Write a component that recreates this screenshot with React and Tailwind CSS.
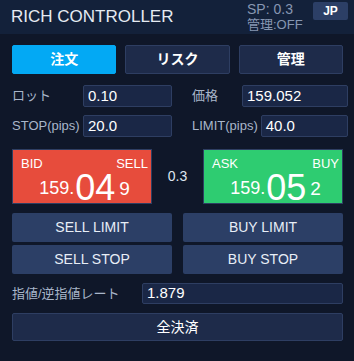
const font = { fontFamily: '"Liberation Sans", "Noto Sans CJK JP", sans-serif' };

const Field = ({ label, value, labelClass }) => (
    <div className="flex items-center">
        <span className={`text-[13px] text-[#a9b6ca] whitespace-nowrap ${labelClass}`}>{label}</span>
        <div className="flex-1 h-[22px] bg-[#1a2746] border border-[#2e3e62] rounded-[2px] px-[4px] flex items-center text-[15px] text-white">
            {value}
        </div>
    </div>
);

const PriceBox = ({ color, left, right, big, small }) => (
    <div className={`w-[140px] h-[55px] ${color} border border-[#2e3e62] text-white pl-2 pr-[3px] pt-[6px] flex flex-col`}>
        <div className="flex justify-between text-[13px] leading-[15px]">
            <span>{left}</span>
            <span>{right}</span>
        </div>
        <div className="flex items-center justify-center gap-[1px] -mt-[1px]">
            <span className="text-[18px] leading-none">159.</span>
            <span className="text-[36px] leading-none">{big}</span>
            <span className="text-[19px] leading-none ml-[3px]">{small}</span>
        </div>
    </div>
);

const OrderButton = ({ children }) => (
    <button className="h-[29px] bg-[#2c3f66] rounded-[2px] text-[14px] text-[#e8eef7]">{children}</button>
);

export default function App() {
    return (
        <div className="w-[354px] h-[361px] bg-[#0f1729] overflow-hidden" style={font}>
            {/* Header */}
            <div className="h-[34px] bg-[#13213a] flex items-center pl-[11px] pr-[6px]">
                <h1 className="text-[17px] text-[#e6ebf2] flex-1">RICH CONTROLLER</h1>
                <div className="w-[66px] flex flex-col text-[#8797b2] -mt-[1px]">
                    <span className="text-[14px] leading-[16px]">SP: 0.3</span>
                    <span className="text-[13px] leading-[15px]">管理:OFF</span>
                </div>
                <button className="w-[35px] h-[18px] bg-[#2c3f66] rounded-[2px] text-[12px] font-bold text-white -mt-[12px]">JP</button>
            </div>

            <div className="pl-3 pr-[11px] pt-[11px]">
                {/* Tabs */}
                <div className="grid grid-cols-3 gap-[9px]">
                    <button className="h-[29px] bg-[#03a9f4] border border-[#03a9f4] rounded-[2px] text-[14px] font-bold text-white">注文</button>
                    <button className="h-[29px] bg-[#1e2b4a] border border-[#2e3e62] rounded-[2px] text-[14px] font-bold text-white">リスク</button>
                    <button className="h-[29px] bg-[#1e2b4a] border border-[#2e3e62] rounded-[2px] text-[14px] font-bold text-white">管理</button>
                </div>

                {/* Inputs */}
                <div className="grid grid-cols-[160px_1fr] gap-x-[20px] gap-y-[8px] mt-[11px] mr-[-5px]">
                    <Field label="ロット" value="0.10" labelClass="w-[71px]" />
                    <Field label="価格" value="159.052" labelClass="w-[50px]" />
                    <Field label="STOP(pips)" value="20.0" labelClass="w-[71px]" />
                    <Field label="LIMIT(pips)" value="40.0" labelClass="pr-[3px]" />
                </div>

                {/* Prices */}
                <div className="flex items-center justify-between mt-[12px]">
                    <PriceBox color="bg-[#e74c3c]" left="BID" right="SELL" big="04" small="9" />
                    <span className="text-[14px] text-[#dfe6f0]">0.3</span>
                    <PriceBox color="bg-[#2ecc71]" left="ASK" right="BUY" big="05" small="2" />
                </div>

                {/* Order buttons */}
                <div className="grid grid-cols-2 gap-x-[11px] gap-y-[3px] mt-[9px]">
                    <OrderButton>SELL LIMIT</OrderButton>
                    <OrderButton>BUY LIMIT</OrderButton>
                    <OrderButton>SELL STOP</OrderButton>
                    <OrderButton>BUY STOP</OrderButton>
                </div>

                {/* Rate */}
                <div className="flex items-center mt-[9px]">
                    <span className="w-[130px] text-[13px] text-[#a9b6ca]">指値/逆指値レート</span>
                    <div className="flex-1 h-[21px] bg-[#1a2746] border border-[#2e3e62] rounded-[2px] px-[4px] flex items-center text-[15px] text-white">
                        1.879
                    </div>
                </div>

                <button className="w-full h-[28px] mt-[9px] bg-[#1e2b4a] border border-[#2e3e62] rounded-[2px] text-[14px] text-white">
                    全決済
                </button>
            </div>
        </div>
    );
}
